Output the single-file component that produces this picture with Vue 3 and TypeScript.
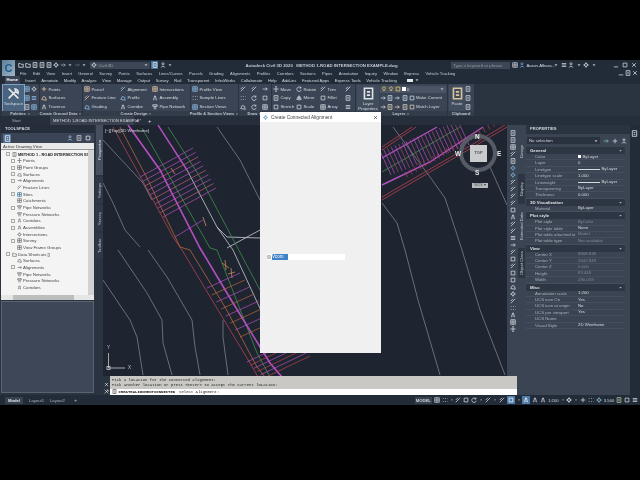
<script setup lang="ts">
import { h, type FunctionalComponent } from 'vue';

// tiny stroke icons, all on an 8x8 box
const glyphs: Record<string, string> = {
  page: 'M1.5 .8h5v6.4h-5zM3 3h2M3 5h2',
  grid: 'M1 1h6v6H1zM1 4h6M4 1v6',
  plus: 'M4 1v6M1 4h6',
  arrow: 'M1 4h6M5 2l2 2-2 2',
  x: 'M1.5 1.5l5 5M6.5 1.5l-5 5',
  move: 'M4 .5v7M.5 4h7M3 1.5l1-1 1 1M3 6.5l1 1 1-1',
  line: 'M1 7L7 1M1 4l3-3',
  poly: 'M1 6l2-4 3 1 1 4z',
  rotate: 'M6.5 2.5A3 3 0 1 0 7 5M6.5 .8v2H4.6',
  mirror: 'M4 .5v7M3 2L1 6h2zM5 2l2 4H5z',
  box: 'M1.5 1.5h5v5h-5z',
  dots: 'M1 2h1M4 2h1M7 2h.5M1 6h1M4 6h1M7 6h.5',
  road: 'M2 7l1.5-6M6 7L4.5 1M4 2v1M4 5v1',
  wrench: 'M1 7l4-4M5 1.2a2 2 0 0 1 1.8 2.6L5.5 3 5 1.2zM1 1l6 6',
  pipe: 'M1 1h6v2H1zM3 3v4M5 3v4',
  bulb: 'M4 1a2 2 0 0 1 1 3.6V6H3V4.6A2 2 0 0 1 4 1z',
  person: 'M4 1a1.4 1.4 0 1 1 0 2.8A1.4 1.4 0 0 1 4 1zM1.5 7.5C2 5 6 5 6.5 7.5',
  gear: 'M4 2a2 2 0 1 1 0 4 2 2 0 0 1 0-4zM4 .5v1.5M4 6v1.5M.5 4H2M6 4h1.5',
  bars: 'M1 2h6M1 4h6M1 6h6',
  min: 'M1 6.5h6',
  folder: 'M1 2h2l1 1h3v4H1z',
  caret: 'M2 3l2 2.5L6 3z',
};

const Ic: FunctionalComponent<{ n: string; c?: string; s?: number }> = (p) =>
  h(
    'svg',
    {
      viewBox: '0 0 8 8',
      width: p.s ?? 6,
      height: p.s ?? 6,
      fill: p.n === 'caret' ? '#aeb6c2' : 'none',
      stroke: p.n === 'caret' ? 'none' : p.c ?? '#d5dae2',
      'stroke-width': 1,
      style: 'flex:none',
    },
    [h('path', { d: glyphs[p.n] })],
  );

const menus = ['File', 'Edit', 'View', 'Insert', 'General', 'Survey', 'Points', 'Surfaces', 'Lines/Curves', 'Parcels', 'Grading', 'Alignments', 'Profiles', 'Corridors', 'Sections', 'Pipes', 'Annotation', 'Inquiry', 'Window', 'Express', 'Vehicle Tracking'];
const ribbonTabs = ['Insert', 'Annotate', 'Modify', 'Analyze', 'View', 'Manage', 'Output', 'Survey', 'Rail', 'Transparent', 'InfraWorks', 'Collaborate', 'Help', 'Add-ins', 'Featured Apps', 'Express Tools', 'Vehicle Tracking'];

interface RibbonItem { icon: string; label?: string; color?: string }
interface RibbonCol { w: number; items: RibbonItem[]; large?: boolean }
interface RibbonPanel { title: string; w: number; cols: RibbonCol[]; layers?: boolean }

const pink = '#e9c9a8';
const blue = '#8fc0ea';
const panels: RibbonPanel[] = [
  { title: 'Palettes', w: 37, cols: [
    { w: 21, large: true, items: [{ icon: 'wrench', label: 'Toolspace', color: '#e6e6e6' }] },
    { w: 7, items: [{ icon: 'grid', color: blue }, { icon: 'grid', color: blue }, { icon: 'page' }] },
    { w: 7, items: [{ icon: 'gear' }, { icon: 'bars', color: blue }, { icon: 'grid', color: blue }] },
  ] },
  { title: 'Create Ground Data', w: 42, cols: [
    { w: 40, items: [{ icon: 'plus', label: 'Points', color: pink }, { icon: 'poly', label: 'Surfaces', color: pink }, { icon: 'road', label: 'Traverse' }] },
  ] },
  { title: 'Create Design', w: 107, cols: [
    { w: 36, items: [{ icon: 'grid', label: 'Parcel', color: pink }, { icon: 'line', label: 'Feature Line', color: pink }, { icon: 'poly', label: 'Grading', color: blue }] },
    { w: 32, items: [{ icon: 'line', label: 'Alignment', color: blue }, { icon: 'poly', label: 'Profile', color: blue }, { icon: 'road', label: 'Corridor' }] },
    { w: 38, items: [{ icon: 'grid', label: 'Intersections', color: pink }, { icon: 'road', label: 'Assembly' }, { icon: 'pipe', label: 'Pipe Network' }] },
  ] },
  { title: 'Profile & Section Views', w: 47, cols: [
    { w: 46, items: [{ icon: 'grid', label: 'Profile View', color: blue }, { icon: 'dots', label: 'Sample Lines' }, { icon: 'grid', label: 'Section Views', color: blue }] },
  ] },
  { title: 'Draw', w: 32, cols: [
    { w: 11, items: [{ icon: 'line' }, { icon: 'dots' }, { icon: 'poly' }] },
    { w: 11, items: [{ icon: 'line' }, { icon: 'rotate' }, { icon: 'rotate' }] },
    { w: 9, items: [{ icon: 'arrow' }, { icon: 'box' }, { icon: 'grid' }] },
  ] },
  { title: '', w: 83, cols: [
    { w: 23, items: [{ icon: 'move', label: 'Move' }, { icon: 'page', label: 'Copy' }, { icon: 'box', label: 'Stretch' }] },
    { w: 24, items: [{ icon: 'rotate', label: 'Rotate' }, { icon: 'mirror', label: 'Mirror' }, { icon: 'box', label: 'Scale' }] },
    { w: 25, items: [{ icon: 'line', label: 'Trim' }, { icon: 'box', label: 'Fillet' }, { icon: 'grid', label: 'Array' }] },
    { w: 8, items: [{ icon: 'line', color: '#f0f0f0' }, { icon: 'page' }, { icon: 'bars' }] },
  ] },
  { title: 'Layers', w: 91, layers: true, cols: [
    { w: 22, large: true, items: [{ icon: 'page', label: 'Layer Properties', color: '#dfe3e8' }] },
  ] },
  { title: 'Clipboard', w: 26, cols: [
    { w: 16, large: true, items: [{ icon: 'page', label: 'Paste', color: '#d8c49a' }] },
    { w: 8, items: [{ icon: 'page' }, { icon: 'page' }, { icon: 'page' }] },
  ] },
];

const layerIcons = ['arrow', 'page', 'arrow', 'page', 'box'];

interface TreeRow { label: string; icon?: string; root?: boolean; bold?: boolean; exp?: boolean; color?: string }
const tree: TreeRow[] = [
  { label: 'METHOD 1 - ROAD INTERSECTION EX...', icon: 'page', root: true, bold: true, exp: true },
  { label: 'Points', icon: 'move', exp: true },
  { label: 'Point Groups', icon: 'grid', exp: true },
  { label: 'Surfaces', icon: 'poly', exp: true },
  { label: 'Alignments', icon: 'arrow', exp: true },
  { label: 'Feature Lines', icon: 'line' },
  { label: 'Sites', icon: 'grid', exp: true, color: '#2f6f8f' },
  { label: 'Catchments', icon: 'grid' },
  { label: 'Pipe Networks', icon: 'pipe', exp: true },
  { label: 'Pressure Networks', icon: 'pipe' },
  { label: 'Corridors', icon: 'road', exp: true },
  { label: 'Assemblies', icon: 'road', exp: true },
  { label: 'Intersections', icon: 'gear' },
  { label: 'Survey', icon: 'grid', exp: true },
  { label: 'View Frame Groups', icon: 'grid' },
  { label: 'Data Shortcuts []', icon: 'folder', root: true, exp: true },
  { label: 'Surfaces', icon: 'poly' },
  { label: 'Alignments', icon: 'arrow', exp: true },
  { label: 'Pipe Networks', icon: 'pipe' },
  { label: 'Pressure Networks', icon: 'pipe' },
  { label: 'Corridors', icon: 'road' },
];

interface PropRow { k: string; v?: string; dim?: boolean; line?: boolean; swatch?: boolean }
interface PropSection { title: string; rows: PropRow[] }
const propSections: PropSection[] = [
  { title: 'General', rows: [
    { k: 'Color', v: 'ByLayer', swatch: true },
    { k: 'Layer', v: '0' },
    { k: 'Linetype', v: 'ByLayer', line: true },
    { k: 'Linetype scale', v: '1.000' },
    { k: 'Lineweight', v: 'ByLayer', line: true },
    { k: 'Transparency', v: 'ByLayer' },
    { k: 'Thickness', v: '0.000' },
  ] },
  { title: '3D Visualization', rows: [{ k: 'Material', v: 'ByLayer' }] },
  { title: 'Plot style', rows: [
    { k: 'Plot style', v: 'ByColor', dim: true },
    { k: 'Plot style table', v: 'None' },
    { k: 'Plot table attached to', v: 'Model', dim: true },
    { k: 'Plot table type', v: 'Not available', dim: true },
  ] },
  { title: 'View', rows: [
    { k: 'Center X', v: '8808.838', dim: true },
    { k: 'Center Y', v: '2642.849', dim: true },
    { k: 'Center Z', v: '0.000', dim: true },
    { k: 'Height', v: '83.448', dim: true },
    { k: 'Width', v: '280.059', dim: true },
  ] },
  { title: 'Misc', rows: [
    { k: 'Annotation scale', v: '1:200' },
    { k: 'UCS icon On', v: 'Yes' },
    { k: 'UCS icon at origin', v: 'No' },
    { k: 'UCS per viewport', v: 'Yes' },
    { k: 'UCS Name', v: '' },
    { k: 'Visual Style', v: '2D Wireframe' },
  ] },
];

const stripIcons = ['page', 'page', 'grid', 'line', 'page', 'gear', 'gear', 'line', 'line', 'line', 'line', 'box', 'road', 'line', 'line', 'bars', 'arrow', 'line', 'box', 'line', 'box', 'box', 'poly', 'gear', 'line', 'dots', 'road', 'grid', 'move'];
const statusIcons = ['grid', 'dots', 'caret', 'line', 'box', 'rotate', 'caret', 'line', 'caret', 'line'];

// --- drawing, in page coordinates ---
type Pt = [number, number];
interface Stroke { pts: Pt[]; color: string; w?: number }

const ptStr = (p: Pt[]) => p.map((q) => q.join(',')).join(' ');

function hatch(a: Pt, b: Pt, n: number, v: Pt, color: string | string[]): Stroke[] {
  const out: Stroke[] = [];
  for (let i = 0; i < n; i++) {
    const t = n > 1 ? i / (n - 1) : 0;
    const x = a[0] + (b[0] - a[0]) * t;
    const y = a[1] + (b[1] - a[1]) * t;
    const c = Array.isArray(color) ? color[i % color.length] : color;
    out.push({ pts: [[x, y], [x + v[0], y + v[1]]], color: c, w: 0.7 });
  }
  return out;
}

const GRAY = '#7b828c';
const MAG = '#b44fc0';
const RED = '#b8404f';
const ORG = '#b8663a';
const GRN = '#3f8f4a';

const strokes: Stroke[] = [
  // contours
  { pts: [[103, 140], [143, 183], [152, 200]], color: GRAY },
  { pts: [[103, 183], [113, 203], [125, 230], [140, 247]], color: GRAY },
  { pts: [[217, 127], [240, 160], [260, 200]], color: GRAY },
  { pts: [[103, 280], [130, 320], [137, 337], [143, 375]], color: GRAY },
  { pts: [[118, 250], [147, 293], [162, 320], [163, 343], [172, 375]], color: GRAY },
  { pts: [[148, 250], [167, 277], [192, 320], [195, 347], [200, 375]], color: GRAY },
  { pts: [[223, 320], [223, 337], [228, 375]], color: GRAY },
  { pts: [[382, 203], [397, 223], [405, 250], [418, 300], [440, 375]], color: GRAY },
  { pts: [[393, 127], [430, 177], [445, 198], [462, 250], [480, 310], [505, 375]], color: GRAY },
  { pts: [[490, 167], [507, 205]], color: GRAY },
  { pts: [[217, 227], [227, 237], [260, 238]], color: '#c8ccd2' },
  { pts: [[227, 248], [260, 230]], color: '#c8ccd2' },
  // first road
  { pts: [[113, 127], [145, 185], [173, 237], [182, 250], [218, 310], [250, 363], [258, 377]], color: RED },
  { pts: [[120, 127], [148, 180], [180, 247], [190, 250], [225, 307], [257, 367], [265, 377]], color: ORG },
  { pts: [[142, 128], [210, 248], [217, 250], [257, 353], [270, 377]], color: GRN },
  { pts: [[168, 127], [200, 177], [260, 290]], color: GRN },
  { pts: [[158, 125], [187, 170]], color: MAG, w: 1.4 },
  { pts: [[187, 170], [217, 227], [233, 250], [270, 330]], color: '#c8ccd2' },
  { pts: [[128, 125], [160, 170], [200, 248], [233, 303], [270, 363], [282, 377]], color: MAG, w: 1.6 },
  ...hatch([140, 177], [163, 217], 10, [53, -29], [MAG, MAG, '#c05c8a']),
  ...hatch([175, 237], [175, 237], 1, [28, -17], MAG),
  ...hatch([207, 288], [240, 337], 8, [33, -15], [MAG, ORG]),
  ...hatch([247, 362], [264, 378], 6, [46, -22], [MAG, RED]),
  // second road
  { pts: [[382, 147], [412, 127]], color: RED },
  { pts: [[382, 150], [416, 127]], color: RED },
  { pts: [[382, 158], [437, 127]], color: MAG, w: 1.4 },
  { pts: [[382, 172], [460, 127]], color: GRN },
  { pts: [[382, 185], [430, 162], [483, 127]], color: MAG, w: 1.4 },
  { pts: [[382, 197], [480, 140], [505, 125]], color: RED },
  { pts: [[382, 200], [480, 143], [507, 127]], color: RED },
  ...hatch([380, 151], [458, 121], 22, [11, 24], [MAG, MAG, '#a24a70']),
  ...hatch([405, 172], [492, 122], 20, [2.5, 5], RED),
  // markers
  { pts: [[171, 168], [175, 174]], color: '#d88a6a' },
  { pts: [[203, 217], [206, 226]], color: '#d88a6a' },
  { pts: [[222, 263], [229, 268]], color: '#c88a5a' },
  { pts: [[225, 260], [226, 270]], color: '#c88a5a' },
  { pts: [[228, 274], [235, 272]], color: '#c88a5a' },
  { pts: [[231, 268], [232, 278]], color: '#c88a5a' },
];
</script>

<template>
  <div class="screen">
    <div class="window">
      <header class="head">
        <div class="logo"><span>C</span></div>
        <div class="head-rows">
          <div class="titlebar">
            <div class="qat">
              <Ic v-for="(q, i) in ['folder', 'folder', 'page', 'page', 'page', 'gear']" :key="i" :n="q" c="#e6e9ee" />
              <Ic n="arrow" c="#aab2be" /><Ic n="caret" /><Ic n="arrow" c="#667" /><Ic n="caret" />
            </div>
            <div class="ws"><Ic n="gear" /><span>Civil 3D</span><Ic n="caret" class="push" /></div>
            <div class="ws-btn"><Ic n="page" c="#e6f0fa" /></div>
            <Ic n="person" /><Ic n="caret" />
            <span class="title">Autodesk Civil 3D 2020 &nbsp; METHOD 1-ROAD INTERSECTION EXAMPLE.dwg</span>
            <div class="search">Type a keyword or phrase</div>
            <Ic n="grid" />
            <Ic n="person" c="#7aa5dc" />
            <span class="user">Aaron.Albara...</span>
            <Ic n="caret" /><Ic n="bars" /><Ic n="person" /><Ic n="caret" />
            <Ic n="gear" c="#f0f0f0" /><Ic n="caret" />
            <div class="winctl"><Ic n="min" /><Ic n="box" /><Ic n="x" /></div>
          </div>
          <div class="menubar">
            <span v-for="m in menus" :key="m">{{ m }}</span>
            <div class="winctl small"><Ic n="min" /><Ic n="page" /><Ic n="x" /></div>
          </div>
        </div>
      </header>

      <nav class="ribbon-tabs">
        <span class="tab-home">Home</span>
        <span v-for="t in ribbonTabs" :key="t">{{ t }}</span>
        <span class="tab-extra"><i></i><Ic n="caret" /></span>
      </nav>

      <section class="ribbon">
        <div v-for="p in panels" :key="p.title" class="panel" :style="{ width: p.w + 'px' }">
          <div class="panel-body">
            <div v-for="(col, ci) in p.cols" :key="ci" class="rcol" :class="{ large: col.large }" :style="{ width: col.w + 'px' }">
              <div v-for="(it, ii) in col.items" :key="ii" class="ritem">
                <Ic :n="it.icon" :c="it.color" :s="col.large ? 13 : 6" />
                <span v-if="it.label">{{ it.label }}</span>
              </div>
            </div>
            <div v-if="p.layers" class="layers">
              <div class="layer-combo">
                <Ic n="bulb" c="#e8c860" /><Ic n="bulb" c="#e8c860" /><Ic n="box" c="#e8c860" />
                <i class="white-box"></i><span>0</span><Ic n="caret" class="push" />
              </div>
              <div class="layer-row"><Ic v-for="(l, i) in layerIcons" :key="i" :n="l" c="#cfe0ee" /><span>Make Current</span></div>
              <div class="layer-row"><Ic v-for="(l, i) in layerIcons" :key="i" :n="l" c="#e2d8c0" /><span>Match Layer</span></div>
            </div>
          </div>
          <div class="panel-foot">{{ p.title }}<Ic v-if="p.title && p.title !== 'Clipboard'" n="caret" :s="4" /></div>
        </div>
      </section>

      <div class="doc-tabs">
        <span class="doc-start">Start</span>
        <span class="doc-active">METHOD 1-ROAD INTERSECTION EXAMPLE*</span>
        <Ic n="x" :s="4" />
        <span class="doc-plus">+</span>
      </div>

      <main class="workspace">
        <aside class="toolspace">
          <div class="pal-title">TOOLSPACE</div>
          <div class="ts-tools">
            <span class="ts-active"><Ic n="page" c="#dfe9f5" :s="7" /></span>
            <span class="push-row"><Ic n="person" c="#9cc4e4" /><Ic n="page" /><Ic n="box" c="#eee" /></span>
          </div>
          <div class="ts-combo">Active Drawing View</div>
          <div class="tree-wrap">
            <ul class="tree">
              <li v-for="(r, i) in tree" :key="i" :class="{ root: r.root, bold: r.bold }">
                <b class="exp" :class="{ off: !r.exp }"></b>
                <Ic v-if="r.icon" :n="r.icon" :c="r.color ?? '#666'" :s="5" />
                <span>{{ r.label }}</span>
              </li>
            </ul>
            <div class="vscroll"></div>
          </div>
          <div class="hscroll"><span></span></div>
          <div class="ts-lower"></div>
        </aside>

        <div class="vtabs">
          <span class="vt on" style="height: 50px">Prospector</span>
          <span class="vt" style="height: 26px">Settings</span>
          <span class="vt" style="height: 26px">Survey</span>
          <span class="vt" style="height: 26px">Toolbox</span>
        </div>

        <div class="viewport">
          <svg class="drawing" viewBox="103 125 404 270" preserveAspectRatio="none">
            <polyline v-for="(s, i) in strokes" :key="i" :points="ptStr(s.pts)" fill="none" :stroke="s.color" :stroke-width="s.w ?? 0.8" />
            <g class="ucs" stroke="#c4c8ce" stroke-width="0.8" fill="none">
              <path d="M108.500 353V368H125" />
              <rect x="107" y="366.500" width="3" height="3" />
            </g>
            <circle cx="478" cy="153" r="17" fill="none" stroke="#565c66" stroke-width="4" />
            <rect x="470" y="145" width="17" height="17" fill="#c9cbcd" />
            <rect x="472" y="183" width="16" height="5" fill="#b5b9bf" />
          </svg>
          <span class="vp-label">[−][Top][2D Wireframe]</span>
          <span class="ucs-t ucs-y">Y</span><span class="ucs-t ucs-x">X</span>
          <span class="cube n">N</span><span class="cube s">S</span><span class="cube e">E</span><span class="cube w">W</span>
          <span class="cube-top">TOP</span>
          <span class="cube-wcs">WCS ▾</span>
        </div>

        <aside class="props">
          <div class="pstrip">
            <Ic v-for="(s, i) in stripIcons" :key="i" :n="s" :c="i === 5 || i === 6 ? '#7fb4e0' : '#d8dce2'" :s="6" />
          </div>
          <div class="ptabs">
            <span class="pt" style="height: 43px">Design</span>
            <span class="pt on" style="height: 30px">Display</span>
            <span class="pt" style="height: 42px">Extended Data</span>
            <span class="pt on" style="height: 30px">Object Class</span>
          </div>
          <div class="pmain">
            <div class="pal-title">PROPERTIES</div>
            <div class="p-combo-row">
              <div class="p-combo">No selection<Ic n="caret" class="push" /></div>
              <Ic n="arrow" c="#7fc7a0" /><Ic n="plus" /><Ic n="person" />
            </div>
            <div v-for="sec in propSections" :key="sec.title" class="p-sec">
              <div class="p-head">{{ sec.title }}<Ic n="caret" class="push" c="#ddd" :s="5" /></div>
              <div v-for="r in sec.rows" :key="r.k" class="p-row">
                <span class="k">{{ r.k }}</span>
                <span class="v" :class="{ dim: r.dim }">
                  <i v-if="r.swatch" class="sw"></i>
                  <i v-if="r.line" class="ln"></i>{{ r.v }}
                </span>
              </div>
            </div>
          </div>
          <div class="pright"><Ic n="page" c="#cfd5dd" :s="7" /></div>
        </aside>

        <!-- floats over the viewport and the ribbon -->
        <div class="dialog">
          <div class="dlg-title">
            <Ic n="gear" c="#2a7fb8" :s="5" />
            <span>Create Connected Alignment</span>
            <Ic n="x" c="#333" :s="5" class="push" />
          </div>
          <div class="dlg-body">
            <div class="dlg-field"><Ic n="page" c="#667" :s="4" /><span>Vcom</span></div>
          </div>
        </div>

        <div class="cmdline">
          <div class="cmd-side"><Ic n="x" c="#e8e8e8" :s="5" /><Ic n="wrench" c="#e8e8e8" :s="5" /></div>
          <div class="cmd-main">
            <div class="cmd-hist">
              <div>Pick a location for the connected alignment:</div>
              <div>Pick another location or press &lt;enter&gt; to accept the current location:</div>
            </div>
            <div class="cmd-input"><Ic n="page" c="#444" :s="5" /><b>CREATEALIGNMENTCONNECTED</b> Select Alignment:</div>
          </div>
        </div>
      </main>

      <footer class="status">
        <span class="st-model">Model</span><span>Layout1</span><span>Layout2</span><span class="st-plus">+</span>
        <div class="st-right">
          <span class="st-box">MODEL</span>
          <Ic v-for="(s, i) in statusIcons" :key="i" :n="s" :s="s === 'caret' ? 4 : 6" />
          <span class="st-on"><Ic n="box" c="#fff" /></span><Ic n="caret" :s="4" />
          <span class="st-on"><Ic n="road" c="#fff" /></span>
          <Ic n="road" /><Ic n="road" />
          <span>1:200</span><Ic n="caret" :s="4" />
          <Ic n="gear" c="#fff" /><Ic n="caret" :s="4" /><Ic n="plus" /><Ic n="dots" /><Ic n="gear" c="#9cc4e4" />
          <span>3.500</span>
          <Ic n="page" c="#b6d0a0" /><Ic n="box" /><Ic n="bars" />
        </div>
      </footer>
    </div>
  </div>
</template>

<style>
html, body { margin: 0; background: #000; }
</style>

<style scoped>
.screen {
  width: 640px;
  height: 480px;
  background: #000;
  padding: 60px 0 75px;
  box-sizing: border-box;
  overflow: hidden;
  font-family: "Liberation Sans", Arial, sans-serif;
  font-size: 4.3px;
  color: #d6dbe2;
}
/* the reference is a soft video frame */
.window { height: 100%; display: flex; flex-direction: column; background: #222b38; filter: blur(0.3px); }
.push { margin-left: auto; }

/* header */
.head { display: flex; height: 16px; background: #222b38; }
.logo {
  width: 13px;
  margin-left: 2px;
  background: linear-gradient(135deg, #5a7f9c, #9fb4c4);
  display: flex;
  align-items: center;
  justify-content: center;
  font-size: 11px;
  font-weight: 700;
  color: #1d5f8c;
  flex: none;
}
.head-rows { flex: 1; min-width: 0; }
.titlebar { height: 10px; display: flex; align-items: center; gap: 1.5px; padding-left: 3px; }
.qat { display: flex; gap: 1px; width: 70px; align-items: center; }
.ws { width: 60px; height: 7px; background: #3d4654; display: flex; align-items: center; gap: 2px; padding: 0 1px; box-sizing: border-box; color: #9aa3af; }
.ws-btn { width: 7px; height: 8px; background: #4a7299; display: flex; align-items: center; justify-content: center; }
.title { margin-left: 71px; width: 129px; white-space: nowrap; font-size: 4.3px; font-weight: 700; color: #c4cad2; flex: none; }
.search { margin-left: 75px; width: 59px; height: 7px; line-height: 7px; background: #3d4654; color: #8e97a3; padding-left: 2px; box-sizing: border-box; flex: none; }
.user { width: 25px; white-space: nowrap; flex: none; }
.winctl { display: flex; gap: 3px; margin-left: auto; padding-right: 3px; }
.winctl.small { gap: 1px; padding-right: 2px; }
.menubar { height: 6px; display: flex; gap: 6.4px; align-items: center; padding-left: 5px; font-size: 4.1px; color: #c9ced6; white-space: nowrap; }

.ribbon-tabs { height: 8px; display: flex; align-items: center; gap: 5.6px; padding-left: 5px; background: #222b38; white-space: nowrap; font-size: 4.2px; }
.tab-home { background: #3a4454; height: 8px; line-height: 8px; padding: 0 1.5px; font-weight: 700; color: #fff; }
.tab-extra { display: flex; align-items: center; gap: 1px; margin-left: 5px; }
.tab-extra i { width: 6px; height: 3px; background: #e4e6ea; }

.ribbon { height: 32px; display: flex; gap: 1px; padding-left: 2px; background: #2a3340; }
.panel { display: flex; flex-direction: column; background: #3a4454; flex: none; }
.panel-body { flex: 1; display: flex; padding: 1px 1px 0; min-height: 0; }
.panel-foot { height: 5px; line-height: 5px; display: flex; align-items: center; justify-content: center; gap: 1px; background: #333c4a; font-size: 4px; font-weight: 700; color: #c0c6cf; white-space: nowrap; }
.rcol { display: flex; flex-direction: column; justify-content: space-around; flex: none; }
.ritem { display: flex; align-items: center; gap: 1.5px; height: 8px; white-space: nowrap; }
.rcol.large { align-items: center; background: #414c5d; justify-content: flex-start; padding-top: 2px; box-sizing: border-box; }
.rcol.large .ritem { flex-direction: column; height: auto; gap: 1px; white-space: normal; text-align: center; line-height: 5px; }
.panel:first-child .rcol.large { background: #4a6480; outline: 0.5px solid #7fa3c4; }
.layers { flex: 1; display: flex; flex-direction: column; justify-content: space-around; padding-left: 1px; min-width: 0; }
.layer-combo { height: 7px; background: #4a5464; display: flex; align-items: center; gap: 1px; padding: 0 1px; }
.white-box { width: 4px; height: 4px; background: #fff; }
.layer-row { display: flex; align-items: center; gap: 1.2px; height: 8px; white-space: nowrap; }

.doc-tabs { height: 9px; display: flex; align-items: center; background: #262e3b; font-size: 4.1px; }
.doc-start { width: 50px; padding-left: 12px; box-sizing: border-box; color: #a8b0bb; }
.doc-active { width: 84px; padding-left: 3px; box-sizing: border-box; height: 9px; line-height: 9px; color: #d5dae1; background: #39414f; white-space: nowrap; margin-right: 1px; }
.doc-plus { margin-left: 9px; font-size: 6px; }

/* workspace */
.workspace { position: relative; flex: 1; display: flex; min-height: 0; }
.toolspace { width: 96px; flex: none; display: flex; flex-direction: column; background: #2a3340; padding: 0 2px 2px 1px; box-sizing: border-box; }
.pal-title { height: 8px; line-height: 8px; padding-left: 4px; font-size: 4.1px; font-weight: 700; color: #d0d5dc; background: #252d3a; flex: none; }
.ts-tools { height: 10px; display: flex; align-items: center; padding: 0 3px 0 2px; flex: none; background: #3a4454; }
.ts-active { width: 8px; height: 9px; background: #4a6a8c; display: flex; align-items: center; justify-content: center; }
.push-row { margin-left: auto; display: flex; gap: 3px; }
.ts-combo { height: 7px; line-height: 7px; background: #e9e9e9; color: #333; padding-left: 2px; flex: none; border-bottom: 0.5px solid #999; box-sizing: border-box; }
.tree-wrap { position: relative; height: 145px; background: #f4f4f4; overflow: hidden; flex: none; }
.tree { list-style: none; margin: 0; padding: 1px 0 0; }
.tree li { display: flex; align-items: center; gap: 1.5px; height: 6.67px; padding-left: 10px; color: #444; white-space: nowrap; }
.tree li.root { padding-left: 5px; }
.tree li.bold { font-weight: 700; color: #222; font-size: 3.9px; }
.exp { width: 2px; height: 2px; border: 0.5px solid #aaa; flex: none; }
.exp.off { border-color: transparent; }
.vscroll { position: absolute; right: 0; top: 0; bottom: 0; width: 6px; background: #d2d2d2; }
.hscroll { height: 5px; background: #e6e6e6; flex: none; padding: 0 20px 0 12px; }
.hscroll span { display: block; height: 100%; background: #bdbdbd; }
.ts-lower { flex: 1; background: #3d4757; border: 0.5px solid #5a6372; margin-top: 1px; }

.vtabs { width: 7px; flex: none; background: #2a3340; display: flex; flex-direction: column; gap: 2px; }
.vt { display: flex; align-items: center; justify-content: center; font-size: 4.2px; writing-mode: vertical-rl; transform: rotate(180deg); color: #b6bdc7; background: #2f3846; }
.vt.on { background: #454f5f; color: #dde1e7; }

.viewport { position: relative; flex: 1; min-width: 0; background: #1f2530; overflow: hidden; }
.drawing { position: absolute; inset: 0; width: 100%; height: 100%; }
.vp-label { position: absolute; left: 2px; top: 3px; color: #d8dce2; font-size: 4.4px; white-space: nowrap; }
.ucs-t { position: absolute; color: #c4c8ce; font-size: 4.5px; }
.ucs-y { left: 4px; top: 220px; }
.ucs-x { left: 25px; top: 240px; }
.cube { position: absolute; color: #e8eaec; font-size: 6.5px; font-weight: 700; }
.cube.n { left: 372px; top: 8px; }
.cube.s { left: 372px; top: 44px; }
.cube.e { left: 394px; top: 25px; }
.cube.w { left: 352px; top: 25px; }
.cube-top { position: absolute; left: 367px; top: 25px; width: 17px; text-align: center; font-size: 4px; font-weight: 700; color: #555; }
.cube-wcs { position: absolute; left: 369px; top: 58px; width: 16px; text-align: center; font-size: 3.6px; color: #444; }

.dialog { position: absolute; left: 260px; top: -13px; width: 121px; height: 241px; display: flex; flex-direction: column; background: #f0f0f0; z-index: 2; }
.dlg-title { height: 10px; display: flex; align-items: center; gap: 3px; padding: 0 3px 0 3px; background: #fff; color: #444; font-size: 4.8px; flex: none; }
.dlg-body { flex: 1; padding-top: 132px; padding-left: 7px; }
.dlg-field { width: 78px; height: 6px; background: #fff; display: flex; align-items: center; gap: 1px; font-size: 4.5px; color: #fff; }
.dlg-field span { background: #3e82c8; padding: 0 4px 0 0; width: 12px; height: 6px; line-height: 6px; }

/* properties */
.props { width: 133px; flex: none; display: flex; background: #3b4453; }
.pstrip { width: 11px; flex: none; display: flex; flex-direction: column; align-items: center; gap: 1px; padding-top: 5px; box-sizing: border-box; }
.ptabs { width: 7px; flex: none; display: flex; flex-direction: column; gap: 1px; padding-top: 5px; box-sizing: border-box; }
.pt { display: flex; align-items: center; justify-content: center; font-size: 4.2px; writing-mode: vertical-rl; transform: rotate(180deg); white-space: nowrap; color: #c2c8d0; }
.pt.on { background: #2d3542; }
.pmain { width: 105px; flex: none; }
.pmain .pal-title { background: #2a3340; height: 9px; margin-left: 1px; }
.p-combo-row { display: flex; align-items: center; gap: 3px; height: 13px; padding: 0 3px 0 2px; }
.p-combo { flex: 1; height: 7px; background: #2a3240; display: flex; align-items: center; padding: 0 1px 0 2px; color: #d0d5dc; }
.p-sec { margin-right: 5px; margin-left: 1px; }
.p-head { height: 7px; line-height: 7px; display: flex; align-items: center; background: #2e3644; font-weight: 700; padding-left: 4px; padding-right: 2px; color: #dde1e6; }
.p-row { height: 6.4px; line-height: 6.4px; display: flex; border-bottom: 0.3px solid #454e5d; box-sizing: border-box; white-space: nowrap; }
.k { width: 52px; padding-left: 9px; box-sizing: border-box; color: #aab1bc; flex: none; }
.v { display: flex; align-items: center; gap: 1.5px; color: #d6dae0; }
.v.dim { color: #818998; }
.sw { width: 3px; height: 3px; background: #fff; }
.ln { width: 22px; height: 0.6px; background: #d6dae0; }
.pright { flex: 1; background: #222b38; padding: 5px 0 0 1px; }

.cmdline { position: absolute; left: 103px; bottom: 0; width: 414px; height: 19px; display: flex; z-index: 3; }
.cmd-side { width: 7px; background: #2a3340; display: flex; flex-direction: column; align-items: center; justify-content: flex-end; gap: 2px; padding-bottom: 1px; }
.cmd-main { flex: 1; font-family: "Liberation Mono", monospace; font-size: 3.95px; color: #222; display: flex; flex-direction: column; }
.cmd-hist { height: 12.500px; background: #c9c8c4; padding: 2px 0 0 2px; box-sizing: border-box; line-height: 5px; white-space: nowrap; }
.cmd-input { flex: 1; background: #fff; display: flex; align-items: center; gap: 1.5px; white-space: pre; padding-left: 2px; }

.status { height: 10px; display: flex; align-items: center; gap: 6px; padding-left: 5px; background: #222b38; font-size: 4.2px; color: #aab1bc; white-space: nowrap; }
.st-model { background: #39414f; padding: 1px 3px; font-weight: 700; color: #e2e5ea; }
.st-plus { font-size: 5.5px; margin-left: 3px; }
.st-right { margin-left: auto; display: flex; align-items: center; gap: 1.9px; padding-right: 2px; color: #d0d5dc; }
.st-box { background: #39414f; padding: 1px; font-weight: 700; }
.st-on { background: #4f7ba8; display: flex; padding: 1px; }
</style>
